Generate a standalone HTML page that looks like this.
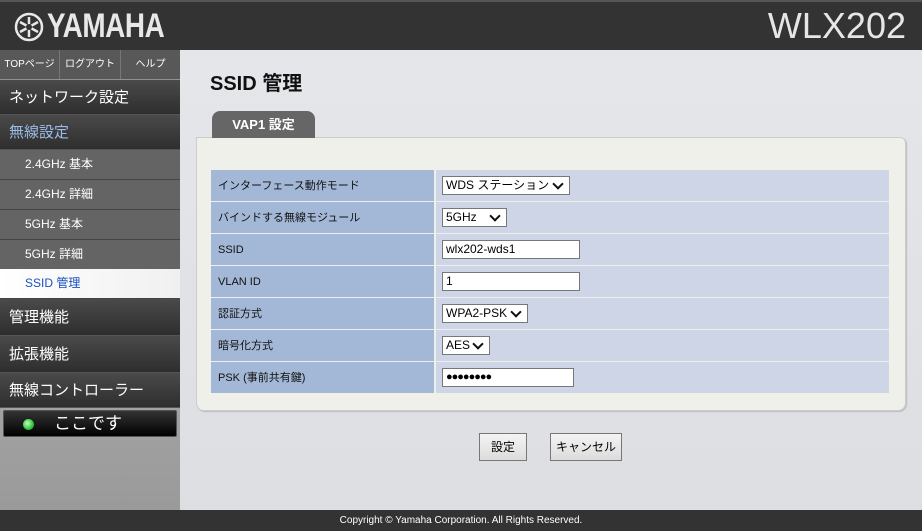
<!DOCTYPE html>
<html><head><meta charset="utf-8"><style>
*{margin:0;padding:0;box-sizing:border-box}
body{width:922px;height:531px;position:relative;overflow:hidden;font-family:"Liberation Sans","Noto Sans CJK JP",sans-serif;background:linear-gradient(#e6e7ea,#dcdee2);}
.abs{position:absolute}
#hdr{left:0;top:0;width:922px;height:50px;background:#333;border-top:2px solid #555}
#logo{left:14px;top:7px;color:#e8e8e8;display:flex;align-items:center;gap:3px}
#logo span{font-size:34px;font-weight:bold;display:inline-block;transform:scaleX(0.82);transform-origin:left;letter-spacing:-0.5px}
#model{right:16px;top:5px;color:#e6e6e6;font-size:36px;letter-spacing:0px}
#side{left:0;top:50px;width:180px;height:460px;background:linear-gradient(#8e8e8e,#a8a8a8 60%,#9a9a9a)}
.tb{top:0;height:29px;background:#585858;color:#fff;font-size:10px;line-height:29px;text-align:center;border-right:1px solid #777}
.mi{left:0;width:180px;color:#fff;font-size:15px;padding-left:9px;background:linear-gradient(#4a4a4a,#2e2e2e);border-bottom:1px solid #555}
.si{left:0;width:180px;height:30px;color:#fff;font-size:12px;padding-left:25px;line-height:29px;background:#646464;border-bottom:1px solid #444}
#main-title{left:210px;top:67px;font-size:20px;font-weight:bold;color:#111}
#tab{left:212px;top:111px;width:103px;height:27px;background:#666;border-radius:8px 8px 0 0;color:#fff;font-weight:bold;font-size:13px;text-align:center;line-height:28px}
#panel{left:196px;top:137px;width:710px;height:274px;background:#f0f0ea;border:1px solid #ccc;border-radius:0 6px 8px 8px;box-shadow:1px 1px 1px #bbb}
.row{left:211px;width:678px;height:31px;display:flex}
.lab{width:223px;background:#a3b8d6;font-size:11px;color:#111;padding-left:7px;line-height:32px}
.val{flex:1;margin-left:2px;background:#cdd5e6;position:relative}
.sel,.inp{position:absolute;left:6px;top:6px;height:19px;background:#fff;border:1px solid #777;font-size:12px;line-height:17px;padding-left:3px;white-space:nowrap;overflow:hidden}
.sel::after{content:"";position:absolute;right:7px;top:3px;width:6px;height:6px;border-right:2px solid #111;border-bottom:2px solid #111;transform:rotate(45deg)}
.btn{top:433px;height:28px;background:linear-gradient(#f4f4f4,#dcdcdc);border:1px solid #777;font-size:12px;text-align:center;line-height:26px}
#ftr{left:0;top:510px;width:922px;height:21px;background:#333;color:#fff;font-size:10px;text-align:center;line-height:21px}
</style></head><body>
<div id="hdr" class="abs"></div>
<div id="logo" class="abs"><svg width="30" height="30" viewBox="0 0 30 30"><circle cx="15" cy="15" r="13" fill="none" stroke="#e8e8e8" stroke-width="2.5"/><g stroke="#e8e8e8" stroke-width="2.5"><line x1="15" y1="5" x2="15" y2="25"/><line x1="6" y1="10" x2="24" y2="20"/><line x1="6" y1="20" x2="24" y2="10"/></g><circle cx="15" cy="15" r="3" fill="#333"/></svg><span>YAMAHA</span></div>
<div id="model" class="abs">WLX202</div>
<div id="side" class="abs">
 <div class="abs tb" style="left:0;width:60px">TOPページ</div>
 <div class="abs tb" style="left:60px;width:61px">ログアウト</div>
 <div class="abs tb" style="left:121px;width:59px;border-right:none">ヘルプ</div>
 <div class="abs mi" style="top:30px;height:35px;line-height:35px">ネットワーク設定</div>
 <div class="abs mi" style="top:65px;height:35px;line-height:35px;color:#9bbbe8">無線設定</div>
 <div class="abs si" style="top:100px">2.4GHz 基本</div>
 <div class="abs si" style="top:130px">2.4GHz 詳細</div>
 <div class="abs si" style="top:160px">5GHz 基本</div>
 <div class="abs si" style="top:190px">5GHz 詳細</div>
 <div class="abs si" style="top:219px;background:linear-gradient(90deg,#fff,#f0f0f0);color:#1a4fc0">SSID 管理</div>
 <div class="abs mi" style="top:249px;height:37px;line-height:37px">管理機能</div>
 <div class="abs mi" style="top:286px;height:37px;line-height:37px">拡張機能</div>
 <div class="abs mi" style="top:323px;height:35px;line-height:35px">無線コントローラー</div>
 <div class="abs" style="left:3px;top:360px;width:174px;height:27px;background:linear-gradient(#333,#000);border:1px solid #555;border-radius:2px;color:#fff;font-size:17px;line-height:25px;padding-left:50px">ここです<span style="position:absolute;left:19px;top:8px;width:11px;height:11px;border-radius:50%;background:radial-gradient(circle at 40% 40%,#bfffbf,#2fc43b 60%,#1a7a22)"></span></div>
</div>
<div id="main-title" class="abs">SSID 管理</div>
<div id="panel" class="abs"></div>
<div id="tab" class="abs">VAP1 設定</div>
<div class="abs row" style="top:170px"><div class="lab">インターフェース動作モード</div><div class="val"><div class="sel" style="width:128px">WDS ステーション</div></div></div>
<div class="abs row" style="top:202px"><div class="lab">バインドする無線モジュール</div><div class="val"><div class="sel" style="width:65px">5GHz</div></div></div>
<div class="abs row" style="top:234px"><div class="lab">SSID</div><div class="val"><div class="inp" style="width:138px">wlx202-wds1</div></div></div>
<div class="abs row" style="top:266px"><div class="lab">VLAN ID</div><div class="val"><div class="inp" style="width:138px">1</div></div></div>
<div class="abs row" style="top:298px"><div class="lab">認証方式</div><div class="val"><div class="sel" style="width:86px">WPA2-PSK</div></div></div>
<div class="abs row" style="top:330px"><div class="lab">暗号化方式</div><div class="val"><div class="sel" style="width:48px">AES</div></div></div>
<div class="abs row" style="top:362px"><div class="lab">PSK (事前共有鍵)</div><div class="val"><div class="inp" style="width:132px;font-size:11px;letter-spacing:-1px">●●●●●●●●</div></div></div>
<div class="abs btn" style="left:479px;width:48px">設定</div>
<div class="abs btn" style="left:550px;width:72px">キャンセル</div>
<div id="ftr" class="abs">Copyright © Yamaha Corporation. All Rights Reserved.</div>
</body></html>
